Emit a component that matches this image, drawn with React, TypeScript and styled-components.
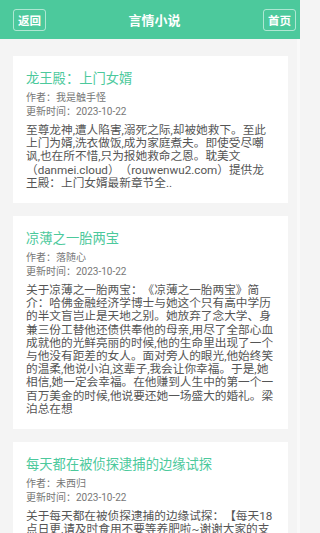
import React from 'react';
import styled, { createGlobalStyle } from 'styled-components';

const GlobalStyle = createGlobalStyle`
  html, body {
    margin: 0;
    padding: 0;
    background: #f4f4f4;
    font-family: Roboto, 'Noto Sans CJK SC', sans-serif;
    text-spacing-trim: space-all;
  }
  * {
    box-sizing: border-box;
  }
`;

const Page = styled.div`
  width: 300px;
  height: 533px;
  overflow: hidden;
  display: flex;
  flex-direction: column;
  background: #f4f4f4;
`;

const TopBar = styled.header`
  flex: none;
  height: 39px;
  display: grid;
  grid-template-columns: 1fr auto 1fr;
  align-items: center;
  padding: 0 4px 0 13px;
  background: #4cc99c;
`;

const BarButton = styled.a<{ $side: 'left' | 'right' }>`
  justify-self: ${(p) => (p.$side === 'left' ? 'start' : 'end')};
  width: 33px;
  height: 22px;
  display: flex;
  align-items: center;
  justify-content: center;
  border: 1px solid rgba(255, 255, 255, 0.55);
  border-radius: 3px;
  color: #fff;
  font-size: 11.5px;
  font-weight: bold;
  text-decoration: none;
`;

const BarTitle = styled.h1`
  margin: 0;
  color: #fff;
  font-size: 13px;
  font-weight: bold;
`;

const BookList = styled.main`
  flex: 1;
  display: flex;
  flex-direction: column;
  gap: 13px;
  padding: 17px 12px 0 13px;
  box-shadow: inset -3px 0 0 #f9f9f9;
`;

const BookCard = styled.section`
  background: #fff;
  padding: 13px;
`;

const BookTitle = styled.h2`
  margin: 0;
  color: #4cc99c;
  font-size: 13.3px;
  font-weight: normal;
  line-height: 20px;
`;

const Meta = styled.div<{ $first?: boolean }>`
  margin-top: ${(p) => (p.$first ? '2px' : '0')};
  color: #777;
  font-size: 10px;
  line-height: 13.5px;
`;

const Intro = styled.p`
  margin: 6px 0 0;
  color: #555;
  font-size: 11.67px;
  line-height: 13.2px;
`;

interface Book {
  title: string;
  author: string;
  updated: string;
  intro: string;
}

const books: Book[] = [
  {
    title: '龙王殿：上门女婿',
    author: '我是触手怪',
    updated: '2023-10-22',
    intro:
      '至尊龙神,遭人陷害,溺死之际,却被她救下。至此上门为婿,洗衣做饭,成为家庭煮夫。即使受尽嘲讽,也在所不惜,只为报她救命之恩。耽美文（danmei.cloud）（rouwenwu2.com）提供龙王殿：上门女婿最新章节全..',
  },
  {
    title: '凉薄之一胎两宝',
    author: '落随心',
    updated: '2023-10-22',
    intro:
      '关于凉薄之一胎两宝：《凉薄之一胎两宝》简介：哈佛金融经济学博士与她这个只有高中学历的半文盲岂止是天地之别。她放弃了念大学、身兼三份工替他还债供奉他的母亲,用尽了全部心血成就他的光鲜亮丽的时候,他的生命里出现了一个与他没有距差的女人。面对旁人的眼光,他始终笑的温柔,他说小泊,这辈子,我会让你幸福。于是,她相信,她一定会幸福。在他赚到人生中的第一个一百万美金的时候,他说要还她一场盛大的婚礼。梁泊总在想',
  },
  {
    title: '每天都在被侦探逮捕的边缘试探',
    author: '未西归',
    updated: '2023-10-22',
    intro:
      '关于每天都在被侦探逮捕的边缘试探：【每天18点日更,请及时食用不要等养肥啦~谢谢大家的支持】全世界都知道他是个大侦探,可没有人知道他每天都在被侦探逮捕的边缘试探..',
  },
];

const App = () => (
  <>
    <GlobalStyle />
    <Page>
      <TopBar>
        <BarButton $side="left" href="#">返回</BarButton>
        <BarTitle>言情小说</BarTitle>
        <BarButton $side="right" href="#">首页</BarButton>
      </TopBar>
      <BookList>
        {books.map((book) => (
          <BookCard key={book.title}>
            <BookTitle>{book.title}</BookTitle>
            <Meta $first>作者：{book.author}</Meta>
            <Meta>更新时间：{book.updated}</Meta>
            <Intro>{book.intro}</Intro>
          </BookCard>
        ))}
      </BookList>
    </Page>
  </>
);

export default App;
